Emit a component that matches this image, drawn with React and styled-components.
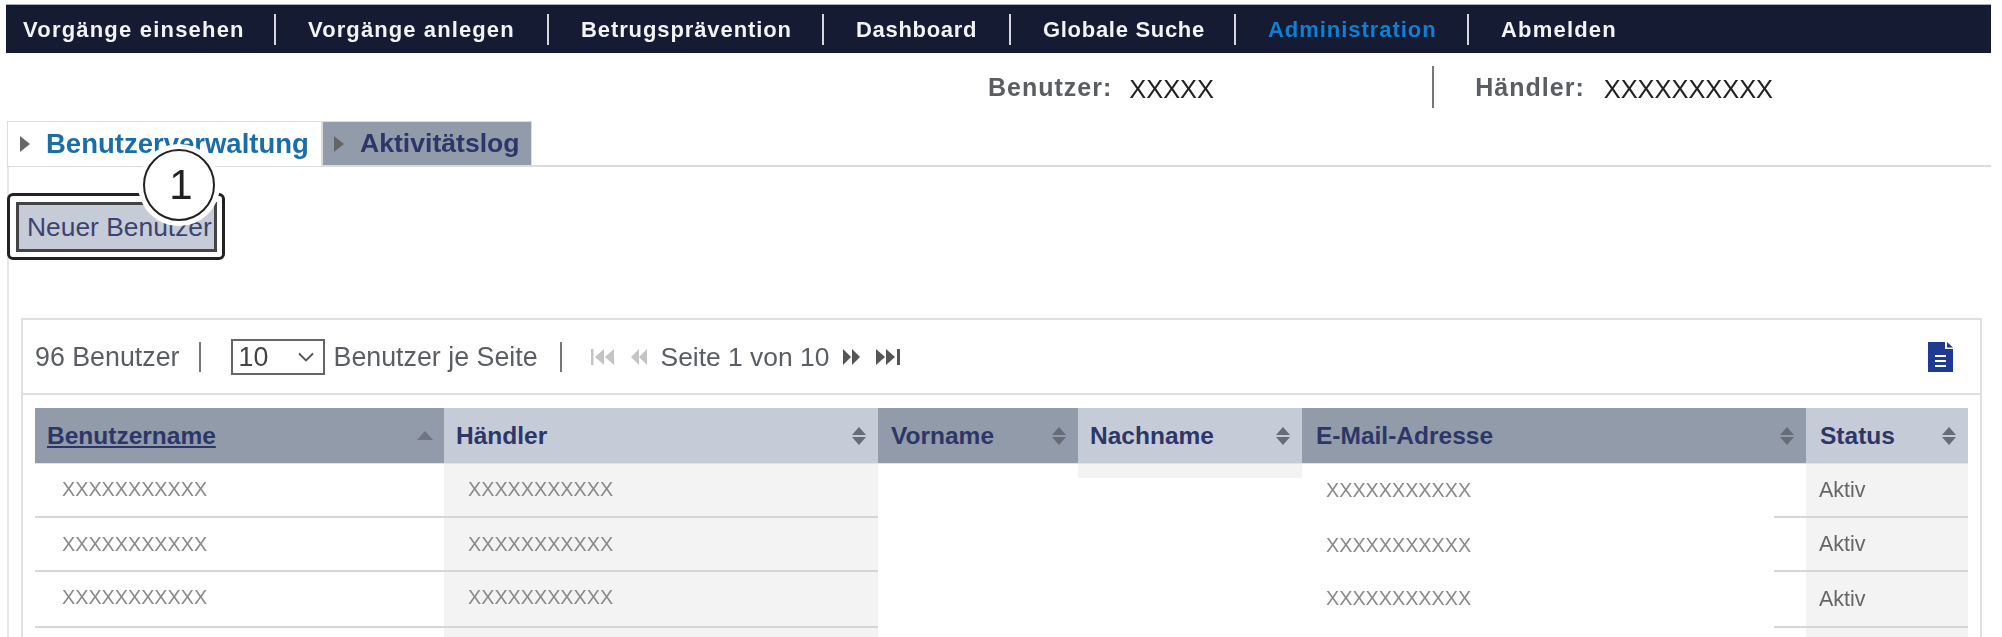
import React from 'react';
import styled, { createGlobalStyle } from 'styled-components';

const Global = createGlobalStyle`
  html, body { margin: 0; padding: 0; background: #fff; }
  body { font-family: "Liberation Sans", Arial, sans-serif; overflow: hidden; }
`;

const Page = styled.div`
  width: 2002px;
  height: 637px;
  overflow: hidden;
  padding-top: 4px;
  box-sizing: border-box;
  filter: blur(0.45px);
`;

const Nav = styled.nav`
  display: flex;
  align-items: center;
  gap: 32px;
  height: 49px;
  margin: 0 11px 0 6px;
  padding-left: 17px;
  background: #141b33;
  border-top: 1px solid #a9adb8;
  box-sizing: border-box;
`;

const NavItem = styled.a`
  display: flex;
  align-items: center;
  width: ${p => p.$w}px;
  height: 31px;
  margin-top: 1px;
  box-sizing: border-box;
  border-right: ${p => (p.$last ? 'none' : '2px solid #d5d7dc')};
  font-size: 22px;
  font-weight: 700;
  letter-spacing: ${p => p.$ls}px;
  color: ${p => (p.$active ? '#0f7fd6' : '#f2f3f5')};
  white-space: nowrap;
`;

const UserBar = styled.div`
  display: flex;
  align-items: center;
  height: 68px;
  padding-left: 988px;
`;

const UserLabel = styled.span`
  font-size: 25px;
  font-weight: 700;
  letter-spacing: 1px;
  color: #5a5d62;
  margin-right: ${p => p.$mr}px;
`;

const UserValue = styled.span`
  font-size: 25.4px;
  color: #222;
  margin-top: 4px;
  width: ${p => p.$w}px;
`;

const UserDivider = styled.span`
  width: 2px;
  height: 42px;
  background: #777;
  margin-right: 41px;
`;

const Tabs = styled.div`
  display: flex;
  height: 46px;
  margin: 0 11px 0 7px;
  border-bottom: 2px solid #dcdcdc;
  box-sizing: border-box;
`;

const Tab = styled.div`
  display: flex;
  align-items: center;
  width: ${p => p.$w}px;
  height: 45px;
  padding-left: ${p => p.$pl}px;
  box-sizing: border-box;
  background: ${p => (p.$active ? '#fff' : '#929baa')};
  border: 1px solid #dcdcdc;
  border-bottom: ${p => (p.$active ? 'none' : '1px solid #dcdcdc')};
  font-size: ${p => p.$size}px;
  font-weight: 700;
  color: ${p => (p.$active ? '#1a6ea8' : '#2c3768')};
`;

const TabArrow = styled.span`
  width: 0;
  height: 0;
  border-top: 8px solid transparent;
  border-bottom: 8px solid transparent;
  border-left: 10px solid #666;
  margin-right: ${p => p.$mr}px;
`;

const Content = styled.main`
  margin-left: 7px;
  border-left: 2px solid #e6e6e6;
  padding-top: 26px;
  height: 480px;
  box-sizing: border-box;
`;

const CalloutBox = styled.div`
  position: relative;
  display: inline-flex;
  margin-bottom: 58px;
  padding: 6px 5px 5px 6px;
  border: 3px solid #222;
  border-radius: 6px;
  margin-left: -2px;
  background: #fff;
`;

const NewButton = styled.button`
  width: 201px;
  height: 50px;
  padding: 0 0 0 8px;
  text-align: left;
  font-family: inherit;
  font-size: 26.4px;
  color: #3b4470;
  background: #c6cbd8;
  border: 3px solid #444;
  white-space: nowrap;
`;

const Badge = styled.span`
  position: absolute;
  left: 133px;
  top: -47px;
  width: 72px;
  height: 72px;
  padding-left: 4px;
  box-sizing: border-box;
  display: flex;
  align-items: center;
  justify-content: center;
  background: #fff;
  border: 2px solid #222;
  border-radius: 50%;
  box-shadow: 0 0 0 5px #fff;
  font-size: 42px;
  color: #222;
`;

const Panel = styled.section`
  margin-left: 12px;
  width: 1961px;
  height: 400px;
  border: 2px solid #e0e0e0;
  box-sizing: border-box;
`;

const Toolbar = styled.div`
  display: flex;
  align-items: center;
  height: 72px;
  padding: 1px 0 0 12px;
  border-bottom: 2px solid #e0e0e0;
  box-sizing: content-box;
  font-size: 26.8px;
  color: #5a5d62;
  white-space: nowrap;
`;

const ToolDivider = styled.span`
  width: 2px;
  height: 30px;
  background: #777;
  margin: 0 ${p => p.$r}px 0 ${p => p.$l}px;
`;

const SelectBox = styled.div`
  display: flex;
  align-items: center;
  justify-content: space-between;
  width: 94px;
  height: 36px;
  padding: 0 8px 0 6px;
  margin-right: 9px;
  box-sizing: border-box;
  border: 2px solid #666;
  color: #444;
`;

const PageLabel = styled.span`
  font-size: 26.4px;
`;

const PagerIcon = styled.svg`
  width: ${p => p.$w}px;
  height: 18px;
  margin-left: ${p => p.$ml}px;
  margin-right: ${p => p.$mr}px;
  fill: ${p => p.$fill};
  flex: none;
`;

const DocLink = styled.span`
  margin-left: auto;
  margin-right: 27px;
  display: flex;
`;

const Table = styled.div`
  display: grid;
  grid-template-columns: 409px 434px 200px 224px 504px 162px;
  grid-template-rows: 56px 54px 54px 56px 60px;
  margin: 13px 0 0 12px;
`;

const HeadCell = styled.div`
  display: flex;
  align-items: center;
  justify-content: space-between;
  padding: 0 11px 0 ${p => p.$pl}px;
  background: ${p => (p.$dark ? '#929baa' : '#c6cbd8')};
  border-bottom: 1px solid #dfe2e8;
  box-sizing: border-box;
  font-size: 24.5px;
  font-weight: 700;
  color: #2c3768;
`;

const HeadLabel = styled.span`
  text-decoration: ${p => (p.$sorted ? 'underline' : 'none')};
`;

const Cell = styled.div`
  position: relative;
  display: flex;
  align-items: center;
  padding-left: ${p => p.$pl}px;
  padding-bottom: ${p => p.$pb || 0}px;
  box-sizing: border-box;
  background: ${p => (p.$shade ? '#f3f3f3' : 'transparent')};
  border-bottom: ${p => (p.$rule ? '2px solid #d6d6d6' : 'none')};
  font-size: 19.8px;
  color: #8a8a8a;
  &::after {
    content: ${p => (p.$endRule ? '""' : 'none')};
    position: absolute;
    right: 0;
    bottom: 0;
    width: 32px;
    height: 2px;
    background: #d6d6d6;
  }
  &::before {
    content: ${p => (p.$stub ? '""' : 'none')};
    position: absolute;
    left: 0;
    right: 0;
    top: 0;
    height: 14px;
    background: #f3f3f3;
  }
`;

const StatusText = styled.span`
  font-size: 21.5px;
  color: #666;
`;

const SortIcon = ({ asc }) => (
  <svg width="16" height="20" viewBox="0 0 16 20" style={{ flex: 'none' }}>
    {asc ? (
      <path d="M0 14 L8 5 L16 14 Z" fill="#6f7682" />
    ) : (
      <>
        <path d="M1 9 L8 1 L15 9 Z" fill="#666d78" />
        <path d="M1 11 L8 19 L15 11 Z" fill="#666d78" />
      </>
    )}
  </svg>
);

const X11 = 'XXXXXXXXXXX';

const navItems = [
  ['Vorgänge einsehen', 253, 1.2],
  ['Vorgänge anlegen', 241, 1.1],
  ['Betrugsprävention', 243, 0.9],
  ['Dashboard', 155, 0.7],
  ['Globale Suche', 193, 0.7],
  ['Administration', 201, 0.95],
  ['Abmelden', 150, 1.2],
];

const rows = [
  { status: 'Aktiv', stub: true, pb: 2 },
  { status: 'Aktiv', pb: 0 },
  { status: 'Aktiv', pb: 4 },
  { status: '', empty: true, pb: 0 },
];

export default function App() {
  return (
    <Page>
      <Global />
      <Nav>
        {navItems.map(([label, w, ls], i) => (
          <NavItem key={label} $w={w} $ls={ls} $last={i === navItems.length - 1} $active={label === 'Administration'}>
            {label}
          </NavItem>
        ))}
      </Nav>
      <UserBar>
        <UserLabel $mr={17}>Benutzer:</UserLabel>
        <UserValue $w={303}>XXXXX</UserValue>
        <UserDivider />
        <UserLabel $mr={19}>Händler:</UserLabel>
        <UserValue>XXXXXXXXXX</UserValue>
      </UserBar>
      <Tabs>
        <Tab $active $w={315} $pl={12} $size={27.5}>
          <TabArrow $mr={16} />
          Benutzerverwaltung
        </Tab>
        <Tab $w={210} $pl={11} $size={26.6}>
          <TabArrow $mr={16} />
          Aktivitätslog
        </Tab>
      </Tabs>
      <Content>
        <CalloutBox>
          <NewButton>Neuer Benutzer</NewButton>
          <Badge>1</Badge>
        </CalloutBox>
        <Panel>
          <Toolbar>
            <span>96 Benutzer</span>
            <ToolDivider $l={19} $r={30} />
            <SelectBox>
              <span>10</span>
              <svg width="18" height="10" viewBox="0 0 18 10">
                <path d="M2 1.5 L9 8.5 L16 1.5" fill="none" stroke="#555" strokeWidth="1.8" />
              </svg>
            </SelectBox>
            <span>Benutzer je Seite</span>
            <ToolDivider $l={22} $r={29} />
            <PagerIcon $w={24} $ml={0} $mr={15} $fill="#c4c4c4" viewBox="0 0 24 18">
              <rect x="0" y="1" width="2.5" height="16" />
              <path d="M13 1 L4 9 L13 17 Z M23 1 L14 9 L23 17 Z" />
            </PagerIcon>
            <PagerIcon $w={18} $ml={0} $mr={13} $fill="#c4c4c4" viewBox="0 0 18 18">
              <path d="M9 1 L1 9 L9 17 Z M17 1 L9 9 L17 17 Z" />
            </PagerIcon>
            <PageLabel>Seite 1 von 10</PageLabel>
            <PagerIcon $w={19} $ml={13} $mr={14} $fill="#555" viewBox="0 0 19 18">
              <path d="M1 1 L9 9 L1 17 Z M10 1 L18 9 L10 17 Z" />
            </PagerIcon>
            <PagerIcon $w={26} $ml={0} $mr={0} $fill="#555" viewBox="0 0 26 18">
              <path d="M1 1 L10 9 L1 17 Z M11 1 L20 9 L11 17 Z" />
              <rect x="22" y="1" width="3" height="16" />
            </PagerIcon>
            <DocLink>
              <svg width="25" height="30" viewBox="0 0 25 30">
                <path d="M0 0 H17 V7 H25 V30 H0 Z M19 0 L25 5.5 H19 Z" fill="#1f3a93" />
                <path d="M7 14 H18 M7 19 H18 M7 24 H18" stroke="#fff" strokeWidth="2" />
              </svg>
            </DocLink>
          </Toolbar>
          <Table>
            <HeadCell $dark $pl={12}>
              <HeadLabel $sorted>Benutzername</HeadLabel>
              <SortIcon asc />
            </HeadCell>
            <HeadCell $pl={12}>
              <HeadLabel>Händler</HeadLabel>
              <SortIcon />
            </HeadCell>
            <HeadCell $dark $pl={13}>
              <HeadLabel>Vorname</HeadLabel>
              <SortIcon />
            </HeadCell>
            <HeadCell $pl={12}>
              <HeadLabel>Nachname</HeadLabel>
              <SortIcon />
            </HeadCell>
            <HeadCell $dark $pl={14}>
              <HeadLabel>E-Mail-Adresse</HeadLabel>
              <SortIcon />
            </HeadCell>
            <HeadCell $pl={14}>
              <HeadLabel>Status</HeadLabel>
              <SortIcon />
            </HeadCell>
            {rows.map((r, i) => (
              <React.Fragment key={i}>
                <Cell $pl={27} $rule $pb={r.pb}>{r.empty ? '' : X11}</Cell>
                <Cell $pl={24} $rule $shade $pb={r.pb}>{r.empty ? '' : X11}</Cell>
                <Cell />
                <Cell $stub={r.stub} />
                <Cell $pl={24} $endRule $pb={r.pb}>{r.empty ? '' : X11}</Cell>
                <Cell $pl={13} $rule $shade>
                  <StatusText>{r.status}</StatusText>
                </Cell>
              </React.Fragment>
            ))}
          </Table>
        </Panel>
      </Content>
    </Page>
  );
}
